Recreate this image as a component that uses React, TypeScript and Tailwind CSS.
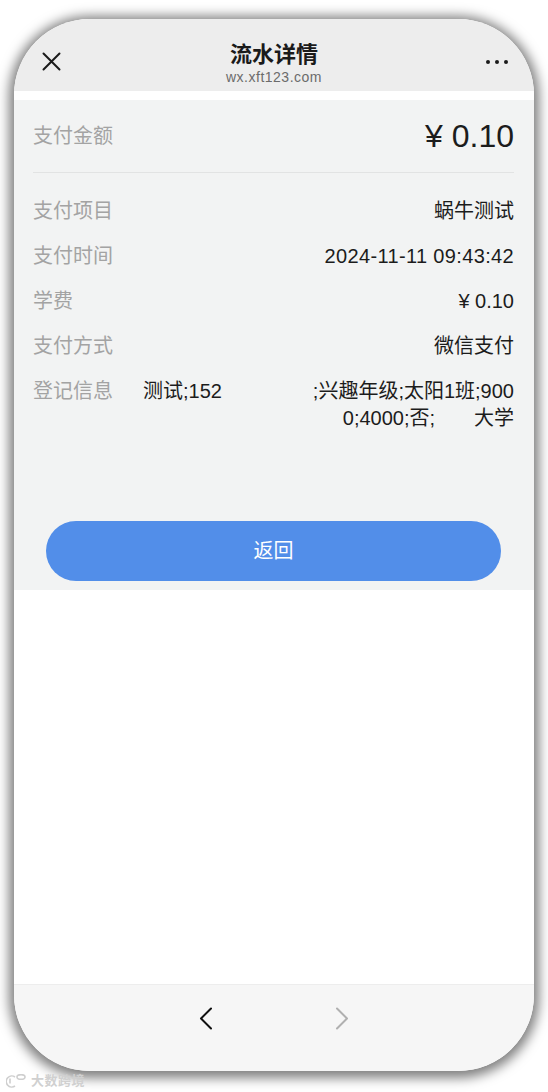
import React from "react";

const FONT = { fontFamily: '"Liberation Sans", "Noto Sans CJK SC", sans-serif' };

function Row({ label, children }: { label: string; children: React.ReactNode }) {
  return (
    <div className="flex py-[9px] text-[20px] leading-[27px]">
      <div className="w-[110px] shrink-0 text-[#a3a3a3]">{label}</div>
      <div className="flex-1 text-right text-[#1c1c1c]">{children}</div>
    </div>
  );
}

export default function App() {
  return (
    <div className="relative w-[548px] h-[1092px] bg-white overflow-hidden" style={FONT}>
      <div className="pt-[19px] pl-[14px]">
        <div className="w-[520px] h-[1052px] rounded-[76px] overflow-hidden bg-white flex flex-col shadow-[0_2px_12px_5px_rgba(0,0,0,0.5)]">
          {/* header */}
          <div className="relative h-[72px] shrink-0 bg-[#ededed]">
            <svg
              className="absolute left-[28px] top-[33px]"
              width="19"
              height="19"
              viewBox="0 0 19 19"
              fill="none"
              stroke="#1a1a1a"
              strokeWidth="2"
              strokeLinecap="round"
            >
              <path d="M1.5 1.5L17.5 17.5M17.5 1.5L1.5 17.5" />
            </svg>
            <div className="flex flex-col items-center pt-[23px]">
              <div className="text-[22px] leading-[26px] font-semibold text-[#1a1a1a]">流水详情</div>
              <div className="text-[14px] leading-[16px] tracking-[0.5px] text-[#6b6b6b] mt-[1px]">wx.xft123.com</div>
            </div>
            <div className="absolute right-[26px] top-[41px] flex gap-[5px]">
              <span className="block w-[4px] h-[4px] rounded-full bg-[#1a1a1a]" />
              <span className="block w-[4px] h-[4px] rounded-full bg-[#1a1a1a]" />
              <span className="block w-[4px] h-[4px] rounded-full bg-[#1a1a1a]" />
            </div>
          </div>
          <div className="h-[9px] shrink-0 bg-white" />
          {/* content */}
          <div className="h-[490px] shrink-0 bg-[#f2f3f3] pl-[19px] pr-[20px]">
            <div className="h-[73px] flex items-center justify-between border-b border-[#e2e3e3]">
              <span className="text-[20px] text-[#a3a3a3]">支付金额</span>
              <span className="text-[32px] text-[#1c1c1c]">¥ 0.10</span>
            </div>
            <div className="pt-[16px]">
              <Row label="支付项目">蜗牛测试</Row>
              <Row label="支付时间">
                <span className="tracking-[0.35px]">2024-11-11 09:43:42</span>
              </Row>
              <Row label="学费">¥ 0.10</Row>
              <Row label="支付方式">微信支付</Row>
              <div className="flex py-[9px] text-[20px] leading-[27px]">
                <div className="w-[110px] shrink-0 text-[#a3a3a3]">登记信息</div>
                <div className="flex-1 text-[#1c1c1c]">
                  <div className="flex justify-between">
                    <span>测试;152</span>
                    <span>;兴趣年级;太阳1班;900</span>
                  </div>
                  <div className="text-right whitespace-pre">{"0;4000;否;       大学"}</div>
                </div>
              </div>
            </div>
            <div className="pt-[80px] px-[13px]">
              <button className="w-full h-[60px] rounded-full bg-[#528ee9] text-white text-[20px]">返回</button>
            </div>
          </div>
          <div className="flex-1 bg-white" />
          {/* bottom bar */}
          <div className="h-[87px] shrink-0 bg-[#f6f6f6] border-t border-[#ededed] flex justify-center pt-[22px] gap-[122px]">
            <svg width="14" height="23" viewBox="0 0 14 23" fill="none" stroke="#111" strokeWidth="2" strokeLinecap="round" strokeLinejoin="round">
              <path d="M12 1.5L2 11.5L12 21.5" />
            </svg>
            <svg width="14" height="23" viewBox="0 0 14 23" fill="none" stroke="#b0b0b0" strokeWidth="2" strokeLinecap="round" strokeLinejoin="round">
              <path d="M2 1.5L12 11.5L2 21.5" />
            </svg>
          </div>
        </div>
      </div>
      {/* watermark */}
      <div className="absolute left-[6px] top-[1074px] flex items-center gap-[5px] text-[#d0d0d0]">
        <svg width="20" height="14" viewBox="0 0 20 14" fill="none" stroke="#cfcfcf" strokeWidth="1.6">
          <path d="M9 3A5.5 5.5 0 1 0 9 12" />
          <path d="M4 4.5V9.5" />
          <ellipse cx="15" cy="3" rx="4" ry="2.3" />
        </svg>
        <span className="text-[13px] leading-[14px] font-bold tracking-[0.5px]">大数跨境</span>
      </div>
    </div>
  );
}
